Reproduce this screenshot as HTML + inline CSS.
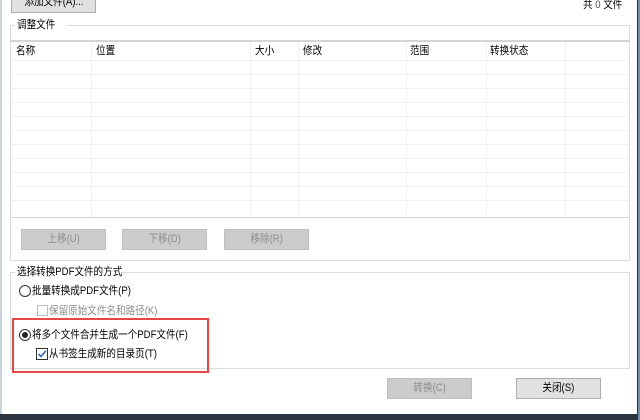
<!DOCTYPE html>
<html><head><meta charset="utf-8"><style>
*{margin:0;padding:0;box-sizing:border-box}
body{width:640px;height:420px;overflow:hidden;background:#2c3440;position:relative;font-family:"Liberation Sans","Noto Sans CJK SC",sans-serif;font-size:11px;color:#000}
.a{position:absolute}
.t{display:inline-block;transform:scaleX(.87);transform-origin:0 50%;white-space:nowrap}
.c{transform-origin:50% 50%}
.dlg{left:0;top:0;width:637px;height:414px;background:#fff;border-left:2px solid #c9d3de}
.btn{position:absolute;height:21px;background:#e1e1e1;border:1px solid #adadad;text-align:center;line-height:19px}
.dis{background:#cccccc;border-color:#bfbfbf;color:#8d8d8d}
.grp{position:absolute;border:1px solid #dcdcdc}
.lbl{position:absolute;background:#fff;padding:0 2px;line-height:14px;width:auto}
.hl{position:absolute;left:0;right:0;height:1px;background:#f0f0f0}
.vl{position:absolute;top:0;bottom:0;width:1px;background:#f0f0f0}
.ht{position:absolute;top:3px;line-height:13px}
</style></head><body>
<div class="a dlg"></div>
<div class="a" style="left:638px;top:0;width:2px;height:420px;background:#6f8fb5"></div>
<div class="btn" style="left:11px;top:-8px;width:85px;"><span class="t c">添加文件(A)...</span></div>
<div class="a" style="left:583px;top:-1px;line-height:13px"><span class="t">共 <span style="color:#555">0</span> 文件</span></div>

<div class="grp" style="left:10px;top:25px;width:620px;height:236px"></div>
<div class="lbl" style="left:15px;top:18px;width:52px"><span class="t">调整文件</span></div>
<div class="a" style="left:11px;top:40px;width:618px;height:178px;background:#fff;border-top:2px solid #d4d4d4;border-bottom:1px solid #d4d4d4">
 <div class="hl" style="top:18px"></div>
 <div class="hl" style="top:32px"></div>
 <div class="hl" style="top:46px"></div>
 <div class="hl" style="top:60px"></div>
 <div class="hl" style="top:74px"></div>
 <div class="hl" style="top:88px"></div>
 <div class="hl" style="top:102px"></div>
 <div class="hl" style="top:116px"></div>
 <div class="hl" style="top:130px"></div>
 <div class="hl" style="top:144px"></div>
 <div class="hl" style="top:158px"></div>
 <div class="vl" style="left:80px"></div>
 <div class="vl" style="left:239px"></div>
 <div class="vl" style="left:287px"></div>
 <div class="vl" style="left:395px"></div>
 <div class="vl" style="left:475px"></div>
 <div class="vl" style="left:554px"></div>
 <div class="ht" style="left:5px"><span class="t">名称</span></div>
 <div class="ht" style="left:85px"><span class="t">位置</span></div>
 <div class="ht" style="left:244px"><span class="t">大小</span></div>
 <div class="ht" style="left:292px"><span class="t">修改</span></div>
 <div class="ht" style="left:399px"><span class="t">范围</span></div>
 <div class="ht" style="left:479px"><span class="t">转换状态</span></div>
</div>
<div class="btn dis" style="left:21px;top:229px;width:85px"><span class="t c">上移(U)</span></div>
<div class="btn dis" style="left:122px;top:229px;width:85px"><span class="t c">下移(D)</span></div>
<div class="btn dis" style="left:224px;top:229px;width:85px"><span class="t c">移除(R)</span></div>

<div class="grp" style="left:10px;top:272px;width:620px;height:97px"></div>
<div class="lbl" style="left:15px;top:265px;width:106px"><span class="t">选择转换PDF文件的方式</span></div>
<div class="a" style="left:19px;top:285px;width:12px;height:12px;border:1px solid #333;border-radius:50%;background:#fff"></div>
<div class="a" style="left:32px;top:284px;line-height:14px"><span class="t">批量转换成PDF文件(P)</span></div>
<div class="a" style="left:37px;top:305px;width:11px;height:11px;border:1px solid #bcbcbc;background:#fff"></div>
<div class="a" style="left:49px;top:304px;line-height:14px;color:#8d8d8d"><span class="t">保留原始文件名和路径(K)</span></div>

<div class="a" style="left:12px;top:318px;width:197px;height:55px;border:2px solid #e84545"></div>
<div class="a" style="left:19px;top:329px;width:12px;height:12px;border:1px solid #333;border-radius:50%;background:#fff"><div class="a" style="left:2px;top:2px;width:6px;height:6px;border-radius:50%;background:#222"></div></div>
<div class="a" style="left:32px;top:328px;line-height:14px"><span class="t">将多个文件合并生成一个PDF文件(F)</span></div>
<div class="a" style="left:36px;top:348px;width:12px;height:12px;border:1px solid #333;background:#fff">
<svg width="10" height="10" style="position:absolute;left:0;top:0"><path d="M1.5 5 L4 7.5 L8.8 1.8" stroke="#2b6fd0" stroke-width="1.6" fill="none"/></svg></div>
<div class="a" style="left:49px;top:347px;line-height:14px"><span class="t">从书签生成新的目录页(T)</span></div>

<div class="btn dis" style="left:387px;top:378px;width:85px"><span class="t c">转换(C)</span></div>
<div class="btn" style="left:516px;top:378px;width:85px"><span class="t c">关闭(S)</span></div>
</body></html>
